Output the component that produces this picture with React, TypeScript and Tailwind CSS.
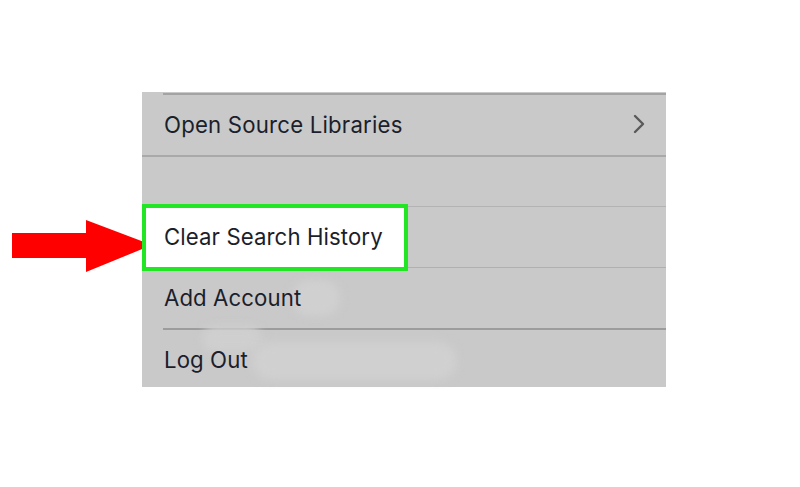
import React from "react";

const font = { fontFamily: "Inter, 'Liberation Sans', sans-serif" };

export default function App() {
  return (
    <div className="relative w-[800px] h-[487px] bg-white overflow-hidden" style={font}>
      <div className="pt-[92px] pl-[142px]">
        <div className="relative w-[524px] bg-[#c9c9c9] text-[#1b1e2b]">
          <div className="h-[3px] flex">
            <div className="w-[21px]" />
            <div className="flex-1 h-[2px] mt-[1px] bg-[#a3a3a3]" />
          </div>
          <div className="h-[60px] flex items-center justify-between pl-[22px] pr-[20px]">
            <span className="text-[22.2px] tracking-[0.2px]">Open Source Libraries</span>
            <svg width="14" height="22" viewBox="0 0 14 22" className="mt-[-2px]">
              <path d="M3 3 L11 11 L3 19" fill="none" stroke="#5a5a5a" strokeWidth="2.4" strokeLinecap="round" strokeLinejoin="round" />
            </svg>
          </div>
          <div className="h-[2px] bg-[#a9a9a9]" />
          <div className="h-[49px]" />
          <div className="h-[1px] bg-[#b3b3b3]" />
          <div className="h-[60px] flex items-center">
            <div className="relative z-10 w-[266px] h-[67px] border-[4px] border-[#22e524] bg-white flex items-center pl-[18px]">
              <span className="text-[22.2px] tracking-[0.1px]">Clear Search History</span>
            </div>
          </div>
          <div className="h-[1px] bg-[#b0b0b0]" />
          <div className="relative h-[60px] flex items-center pl-[22px]">
            <div className="absolute left-[150px] top-[12px] w-[48px] h-[36px] rounded-full bg-[#d0d0d0] blur-[4px]" />
            <span className="relative text-[22.2px] tracking-[0.1px]">Add Account</span>
          </div>
          <div className="h-[2px] flex">
            <div className="w-[21px]" />
            <div className="flex-1 bg-[#9c9c9c]" />
          </div>
          <div className="relative h-[57px] flex items-center pl-[22px]">
            <div className="absolute left-[60px] top-[-4px] w-[60px] h-[26px] rounded-full bg-[#cfcfcf] blur-[4px]" />
            <div className="absolute left-[110px] top-[12px] w-[205px] h-[38px] rounded-full bg-[#d0d0d0] blur-[5px]" />
            <span className="relative text-[22.2px] tracking-[0.1px] mt-[2px]">Log Out</span>
          </div>
        </div>
      </div>
      <svg className="absolute left-[10px] top-[218px]" width="145" height="58" viewBox="0 0 145 58">
        <polygon points="2,15 76,15 76,2 142,27 76,54 76,40 2,40" fill="#ff0000" />
      </svg>
    </div>
  );
}
